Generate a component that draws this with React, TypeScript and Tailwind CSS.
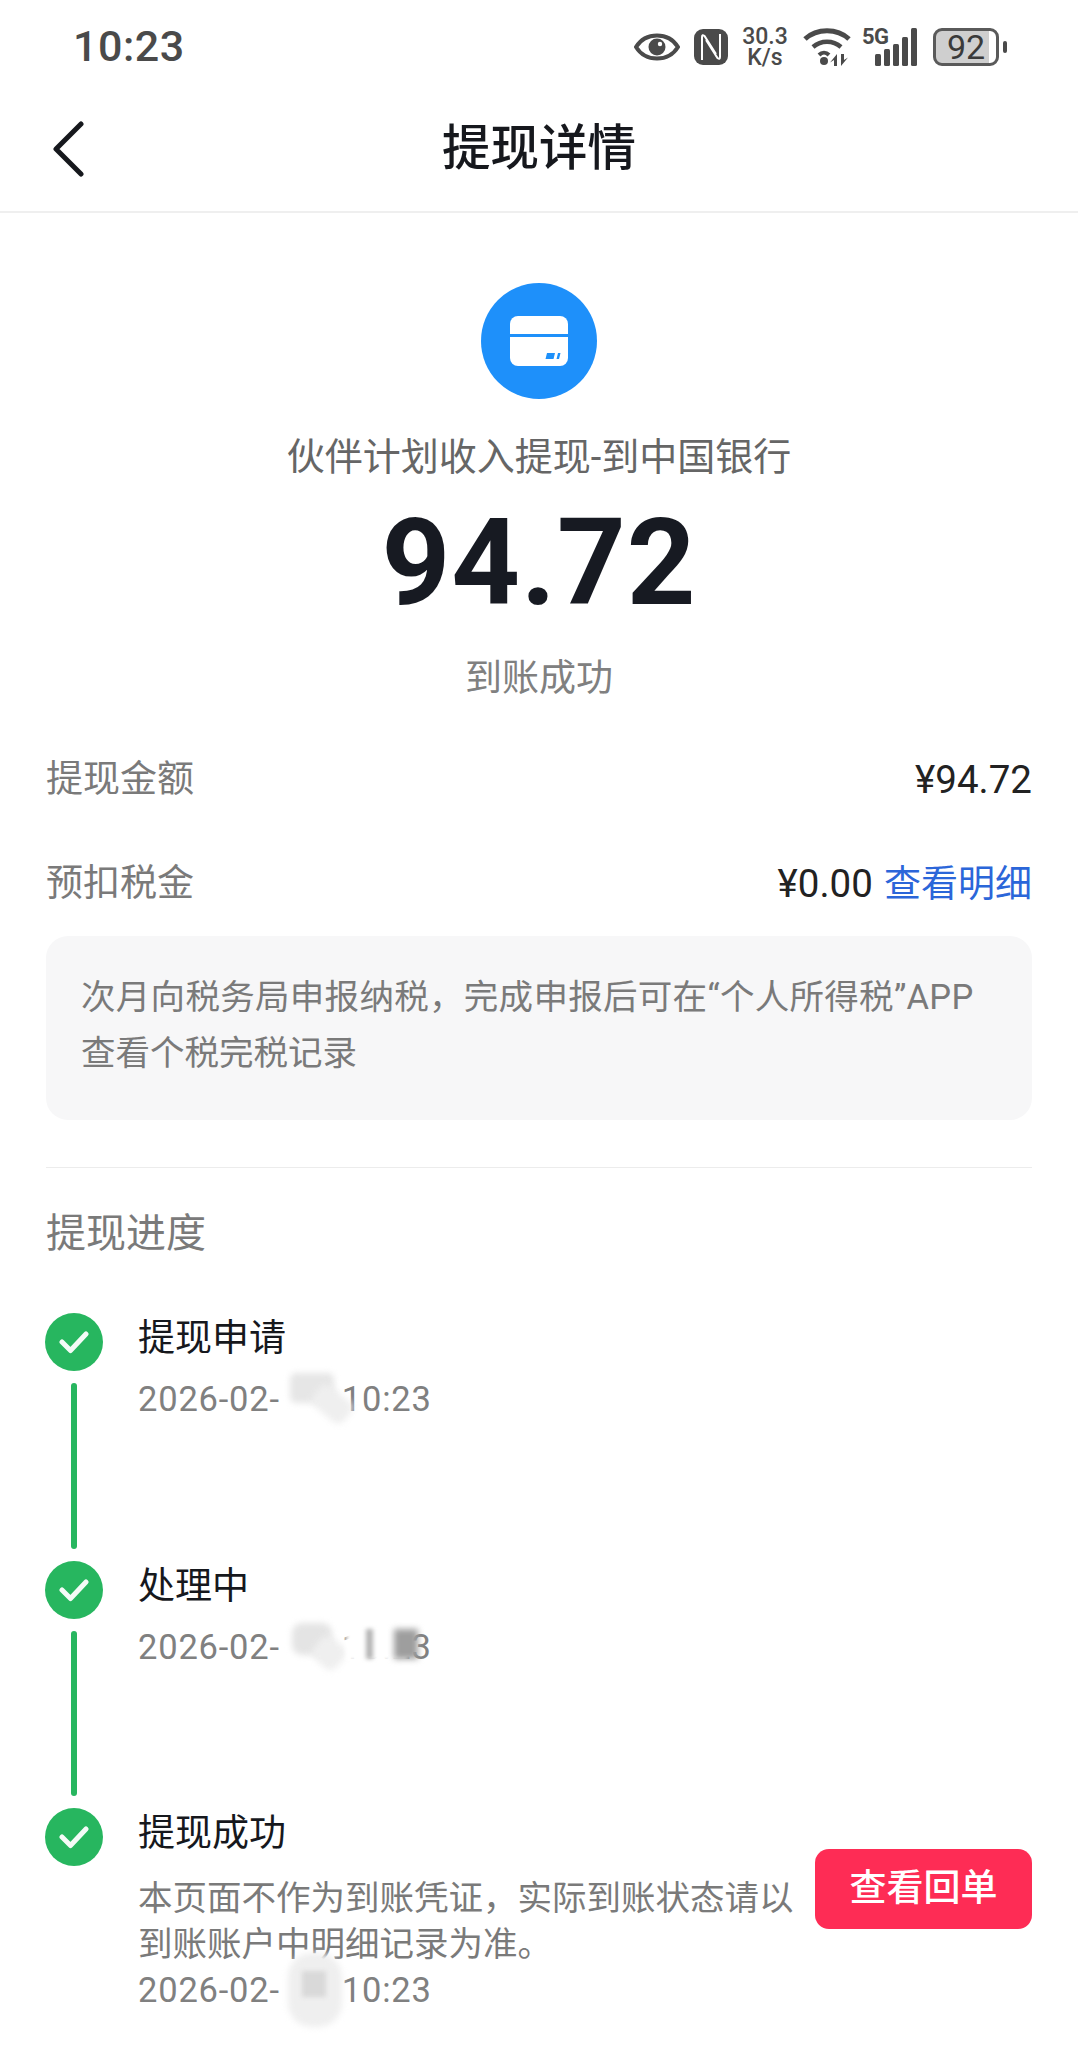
import type { ReactNode } from 'react';

const cjk = "font-['Roboto','Noto_Sans_CJK_SC',sans-serif]";
const COMMA = '\uFF0C';

function StatusIcons() {
  return (
    <div className="flex items-center">
      {/* Eye */}
      <svg width="46" height="28" viewBox="0 0 46 28" className="ml-[1px] mr-[14px]">
        <path d="M2 14C7 6 14 2.500 23 2.500S39 6 44 14c-5 8-12 11.500-21 11.500S7 22 2 14Z" fill="none" stroke="#4a4a4a" strokeWidth="4" />
        <circle cx="23" cy="14" r="8.500" fill="#4a4a4a" />
        <circle cx="26" cy="11" r="2.200" fill="#fff" />
      </svg>
      {/* NFC */}
      <svg width="34" height="36" viewBox="0 0 34 36" className="mr-[12px]">
        <rect width="34" height="36" rx="9" fill="#4a4a4a" />
        <path d="M8 31V8q0-3 2.500-1L22 25M26 5v23q0 3-2.500 1L12 11" fill="none" stroke="#fff" strokeWidth="2" />
      </svg>
      {/* Speed */}
      <div className="mr-[13px] flex w-[50px] flex-col items-center font-['Roboto',sans-serif] text-[23px] font-medium leading-[21px] text-[#4a4a4a]">
        <span>30.3</span>
        <span>K/s</span>
      </div>
      {/* Wifi */}
      <svg width="48" height="38" viewBox="0 0 48 38" className="mr-[11px]">
        <path d="M2 11C14 0 34 0 46 11" fill="none" stroke="#4a4a4a" strokeWidth="5" />
        <path d="M10 19C18 12 30 12 38 19" fill="none" stroke="#4a4a4a" strokeWidth="4.500" />
        <path d="M16 27c3-3 7-3 10 0" fill="none" stroke="#4a4a4a" strokeWidth="4" />
        <circle cx="21" cy="33" r="4" fill="#4a4a4a" />
        <path d="M34 26v12h-3v-6l-4 2.500zM38 38V26h3v6l4-2.500z" fill="#4a4a4a" />
      </svg>
      {/* 5G + signal */}
      <div className="relative mr-[15px] h-[38px] w-[56px]">
        <span className="absolute left-0 top-[-1px] font-['Roboto',sans-serif] text-[22px] font-bold leading-[20px] tracking-[-0.5px] text-[#4a4a4a]">5G</span>
        <svg width="43" height="38" viewBox="0 0 43 38" className="absolute right-0 top-0">
          <rect x="0" y="26" width="6" height="12" rx="1.500" fill="#4a4a4a" />
          <rect x="9" y="21" width="6" height="17" rx="1.500" fill="#4a4a4a" />
          <rect x="18" y="16" width="6" height="22" rx="1.500" fill="#4a4a4a" />
          <rect x="27" y="9" width="6" height="29" rx="1.500" fill="#4a4a4a" />
          <rect x="36" y="0" width="6" height="38" rx="1.500" fill="#4a4a4a" />
        </svg>
      </div>
      {/* Battery */}
      <div className="flex h-[38px] w-[66px] items-center justify-center rounded-[9px] border-[3px] border-[#5a5a5a] bg-[linear-gradient(90deg,#cfcfcf_88%,#ffffff_88%)] font-['Roboto',sans-serif] text-[34px] leading-none text-[#3a3a3a]">
        92
      </div>
      <div className="ml-[4px] h-[12px] w-[4px] rounded-[2px] bg-[#4a4a4a]" />
    </div>
  );
}

function CheckDot() {
  return (
    <div className="flex h-[58px] w-[58px] shrink-0 items-center justify-center rounded-full bg-[#27b65f]">
      <svg width="30" height="24" viewBox="0 0 30 24">
        <path d="M3 12l8.500 8.500L27 4" fill="none" stroke="#fff" strokeWidth="5" strokeLinecap="round" strokeLinejoin="round" opacity="0.95" />
      </svg>
    </div>
  );
}

function Smudge({ className }: { className: string }) {
  return <div className={`absolute ${className}`} />;
}

function DateLine({ tail, children }: { tail: string; children: ReactNode }) {
  return (
    <div className="relative inline-block whitespace-nowrap font-['Roboto',sans-serif] text-[34.500px] tracking-[0.8px] text-[#808080]">
      2026-02-
      <span className="inline-block w-[62px]" />
      {tail}
      {children}
    </div>
  );
}

interface StepProps {
  title: string;
  children: ReactNode;
  last?: boolean;
}

function Step({ title, children, last }: StepProps) {
  return (
    <div className={last ? 'flex' : 'flex h-[247.500px]'}>
      <div className="flex w-[58px] shrink-0 flex-col items-center">
        <CheckDot />
        {!last && <div className="my-[12px] w-[6px] flex-1 rounded-full bg-[#27b65f]" />}
      </div>
      <div className="min-w-0 flex-1 pl-[35px] pt-[1px]">
        <div className="text-[37px] leading-[50px] text-[#16181d]">{title}</div>
        {children}
      </div>
    </div>
  );
}

export default function App() {
  return (
    <div className={`h-[2045px] w-[1078px] overflow-hidden bg-white ${cjk}`}>
      {/* Status bar */}
      <div className="flex h-[90px] items-center justify-between pl-[73px] pr-[71px] pt-[3px]">
        <span className="font-['Roboto',sans-serif] text-[43px] font-medium tracking-[0.5px] text-[#4a4a4a]">10:23</span>
        <StatusIcons />
      </div>

      {/* Nav bar */}
      <div className="grid h-[123px] grid-cols-[1fr_auto_1fr] items-center border-b-2 border-[#efefef] pb-[3px] pl-[52px]">
        <svg width="32" height="56" viewBox="0 0 32 56">
          <path d="M29 3L4 28l25 25" fill="none" stroke="#16181d" strokeWidth="5" strokeLinecap="round" strokeLinejoin="round" />
        </svg>
        <h1 className="-translate-x-[26px] text-[48.500px] font-medium leading-none text-[#16181d]">提现详情</h1>
        <div />
      </div>

      <div className="px-[46px]">
        {/* Summary */}
        <div className="flex flex-col items-center pt-[70px]">
          <div className="flex h-[116px] w-[116px] items-center justify-center rounded-full bg-[#1e90fa]">
            <svg width="58" height="50" viewBox="0 0 58 50">
              <path d="M8 0h42a8 8 0 0 1 8 8v10H0V8a8 8 0 0 1 8-8Z" fill="#fff" />
              <path d="M0 21h58v21a8 8 0 0 1-8 8H8a8 8 0 0 1-8-8Z" fill="#fff" />
              <path d="M37 37h8l-1.500 6h-8ZM48 37h2.500L49 43h-2.500Z" fill="#1e90fa" />
            </svg>
          </div>
          <div className="mt-[30px] text-[38px] leading-[56px] text-[#666666]">伙伴计划收入提现-到中国银行</div>
          <div className="mt-[18px] font-['Roboto',sans-serif] text-[120px] font-bold leading-[120px] tracking-[1px] text-[#171a22]">94.72</div>
          <div className="mt-[31px] text-[37px] leading-[50px] text-[#808080]">到账成功</div>
        </div>

        {/* Amounts */}
        <div className="mt-[51px] flex h-[50px] items-center justify-between text-[37px]">
          <span className="text-[#7a7a7a]">提现金额</span>
          <span className="text-[38.500px] text-[#222222]">¥94.72</span>
        </div>
        <div className="mt-[54px] flex h-[50px] items-center justify-between text-[37px]">
          <span className="text-[#7a7a7a]">预扣税金</span>
          <span className="text-[#222222]">
            <span className="text-[38.500px]">¥0.00</span> <span className="ml-[2px] text-[#2b66d9]">查看明细</span>
          </span>
        </div>

        {/* Tax note */}
        <div className="mt-[27px] h-[184px] rounded-[22px] bg-[#f7f7f8] px-[35px] pt-[33px] text-[34.500px] leading-[56px] text-[#7a7a7a]">
          <div className="whitespace-nowrap tracking-[0.3px]">次月向税务局申报纳税{COMMA}完成申报后可在“个人所得税”APP</div>
          <div>查看个税完税记录</div>
        </div>

        <div className="mt-[47px] h-px bg-[#ececec]" />

        {/* Progress */}
        <div className="mt-[41px] text-[40px] leading-[50px] text-[#7a7a7a]">提现进度</div>
        <div className="mt-[54px] -ml-[1px]">
          <Step title="提现申请">
            <div className="mt-[11px] leading-[48px]">
              <DateLine tail="10:23">
                <Smudge className="left-[152px] top-[-2px] h-[30px] w-[44px] rounded-[6px] bg-[#e6e6e6] blur-[3px]" />
                <Smudge className="left-[174px] top-[16px] h-[26px] w-[40px] rotate-[40deg] rounded-[8px] bg-[#efefef] blur-[3px]" />
              </DateLine>
            </div>
          </Step>
          <Step title="处理中">
            <div className="mt-[11px] leading-[48px]">
              <DateLine tail="10:23">
                <Smudge className="left-[154px] top-[0px] h-[32px] w-[40px] rounded-[10px] bg-[#e4e4e4] blur-[3px]" />
                <Smudge className="left-[176px] top-[16px] h-[28px] w-[30px] rotate-[40deg] rounded-[8px] bg-[#efefef] blur-[3px]" />
                <Smudge className="left-[208px] top-[4px] h-[34px] w-[62px] bg-white blur-[2px]" />
                <Smudge className="left-[228px] top-[6px] h-[30px] w-[7px] bg-[#b4b4b4] blur-[2px]" />
                <Smudge className="left-[256px] top-[6px] h-[30px] w-[24px] bg-[#9e9e9e] blur-[3px]" />
              </DateLine>
            </div>
          </Step>
          <Step title="提现成功" last>
            <div className="flex items-start">
              <div className="mt-[16px] w-[656px] shrink-0 text-[34.500px] leading-[46px] text-[#7a7a7a]">
                <div className="whitespace-nowrap">本页面不作为到账凭证{COMMA}实际到账状态请以</div>
                <div className="whitespace-nowrap">到账账户中明细记录为准。</div>
                <DateLine tail="10:23">
                  <Smudge className="left-[150px] top-[-14px] h-[74px] w-[54px] rounded-[24px] bg-[#efefef] blur-[3px]" />
                  <Smudge className="left-[164px] top-[4px] h-[26px] w-[24px] bg-[#d9d9d9] blur-[2px]" />
                </DateLine>
              </div>
              <button className="-mt-[10px] ml-[21px] flex h-[80px] w-[217px] shrink-0 items-center justify-center rounded-[14px] bg-[#fe2c55] text-[37px] font-medium text-white">
                查看回单
              </button>
            </div>
          </Step>
        </div>
      </div>
    </div>
  );
}
